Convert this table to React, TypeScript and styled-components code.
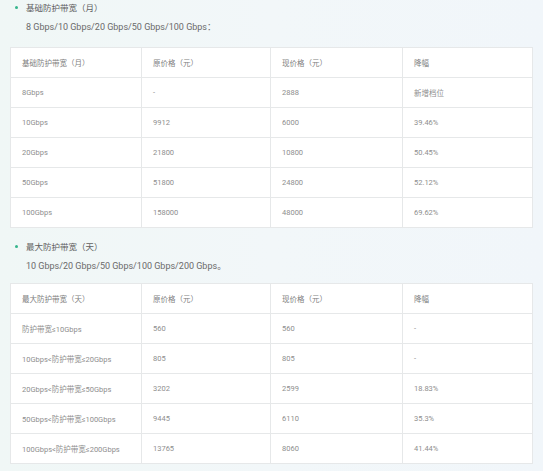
import React from "react";
import styled, { createGlobalStyle } from "styled-components";

const Global = createGlobalStyle`
  html, body { margin: 0; padding: 0; background: #ffffff; }
  body { font-family: Roboto, "Noto Sans CJK SC", sans-serif; }
`;

const Panel = styled.div`
  width: 543px;
  height: 471px;
  box-sizing: border-box;
  padding: 0 11px 0 10px;
  background: linear-gradient(90deg, #f0f7f6 0%, #f2f7f9 50%, #f1f6fa 100%);
`;

const Section = styled.section<{ $top: number }>`
  margin-top: ${(p) => p.$top}px;
`;

const Title = styled.div`
  display: flex;
  align-items: center;
  height: 14px;
  padding-left: 5px;
  gap: 8px;
  font-size: 8.5px;
  color: #606060;
`;

const Dot = styled.span`
  width: 3px;
  height: 3px;
  border-radius: 50%;
  background: #35b58c;
  flex: none;
`;

const Sub = styled.div`
  margin-top: 6px;
  height: 14px;
  line-height: 14px;
  padding-left: 16px;
  font-size: 9px;
  color: #6a6a6a;
`;

const Table = styled.table<{ $top: number }>`
  margin-top: ${(p) => p.$top}px;
  width: 522px;
  border-collapse: collapse;
  table-layout: fixed;
  background: #ffffff;
`;

const Cell = styled.td<{ $head?: boolean }>`
  height: 30px;
  box-sizing: border-box;
  padding: 0 0 0 11px;
  border: 1px solid #e6e8e9;
  font-size: 7.5px;
  color: ${(p) => (p.$head ? "#808080" : "#8e8e8e")};
  white-space: nowrap;
  vertical-align: middle;
`;

type Data = { title: string; sub: string; head: string[]; rows: string[][] };

const sections: Data[] = [
  {
    title: "基础防护带宽（月）",
    sub: "8 Gbps/10 Gbps/20 Gbps/50 Gbps/100 Gbps：",
    head: ["基础防护带宽（月）", "原价格（元）", "现价格（元）", "降幅"],
    rows: [
      ["8Gbps", "-", "2888", "新增档位"],
      ["10Gbps", "9912", "6000", "39.46%"],
      ["20Gbps", "21800", "10800", "50.45%"],
      ["50Gbps", "51800", "24800", "52.12%"],
      ["100Gbps", "158000", "48000", "69.62%"],
    ],
  },
  {
    title: "最大防护带宽（天）",
    sub: "10 Gbps/20 Gbps/50 Gbps/100 Gbps/200 Gbps。",
    head: ["最大防护带宽（天）", "原价格（元）", "现价格（元）", "降幅"],
    rows: [
      ["防护带宽≤10Gbps", "560", "560", "-"],
      ["10Gbps<防护带宽≤20Gbps", "805", "805", "-"],
      ["20Gbps<防护带宽≤50Gbps", "3202", "2599", "18.83%"],
      ["50Gbps<防护带宽≤100Gbps", "9445", "6110", "35.3%"],
      ["100Gbps<防护带宽≤200Gbps", "13765", "8060", "41.44%"],
    ],
  },
];

const widths = [131, 129, 132, 130];

export default function App() {
  return (
    <>
      <Global />
      <Panel>
        {sections.map((s, i) => (
          <Section key={i} $top={i === 0 ? 0 : 11}>
            <Title>
              <Dot />
              {s.title}
            </Title>
            <Sub>{s.sub}</Sub>
            <Table $top={i === 0 ? 13 : 10}>
              <colgroup>
                {widths.map((w, k) => (
                  <col key={k} style={{ width: w }} />
                ))}
              </colgroup>
              <tbody>
                <tr>
                  {s.head.map((h, k) => (
                    <Cell key={k} $head>
                      {h}
                    </Cell>
                  ))}
                </tr>
                {s.rows.map((r, j) => (
                  <tr key={j}>
                    {r.map((c, k) => (
                      <Cell key={k}>{c}</Cell>
                    ))}
                  </tr>
                ))}
              </tbody>
            </Table>
          </Section>
        ))}
      </Panel>
    </>
  );
}
